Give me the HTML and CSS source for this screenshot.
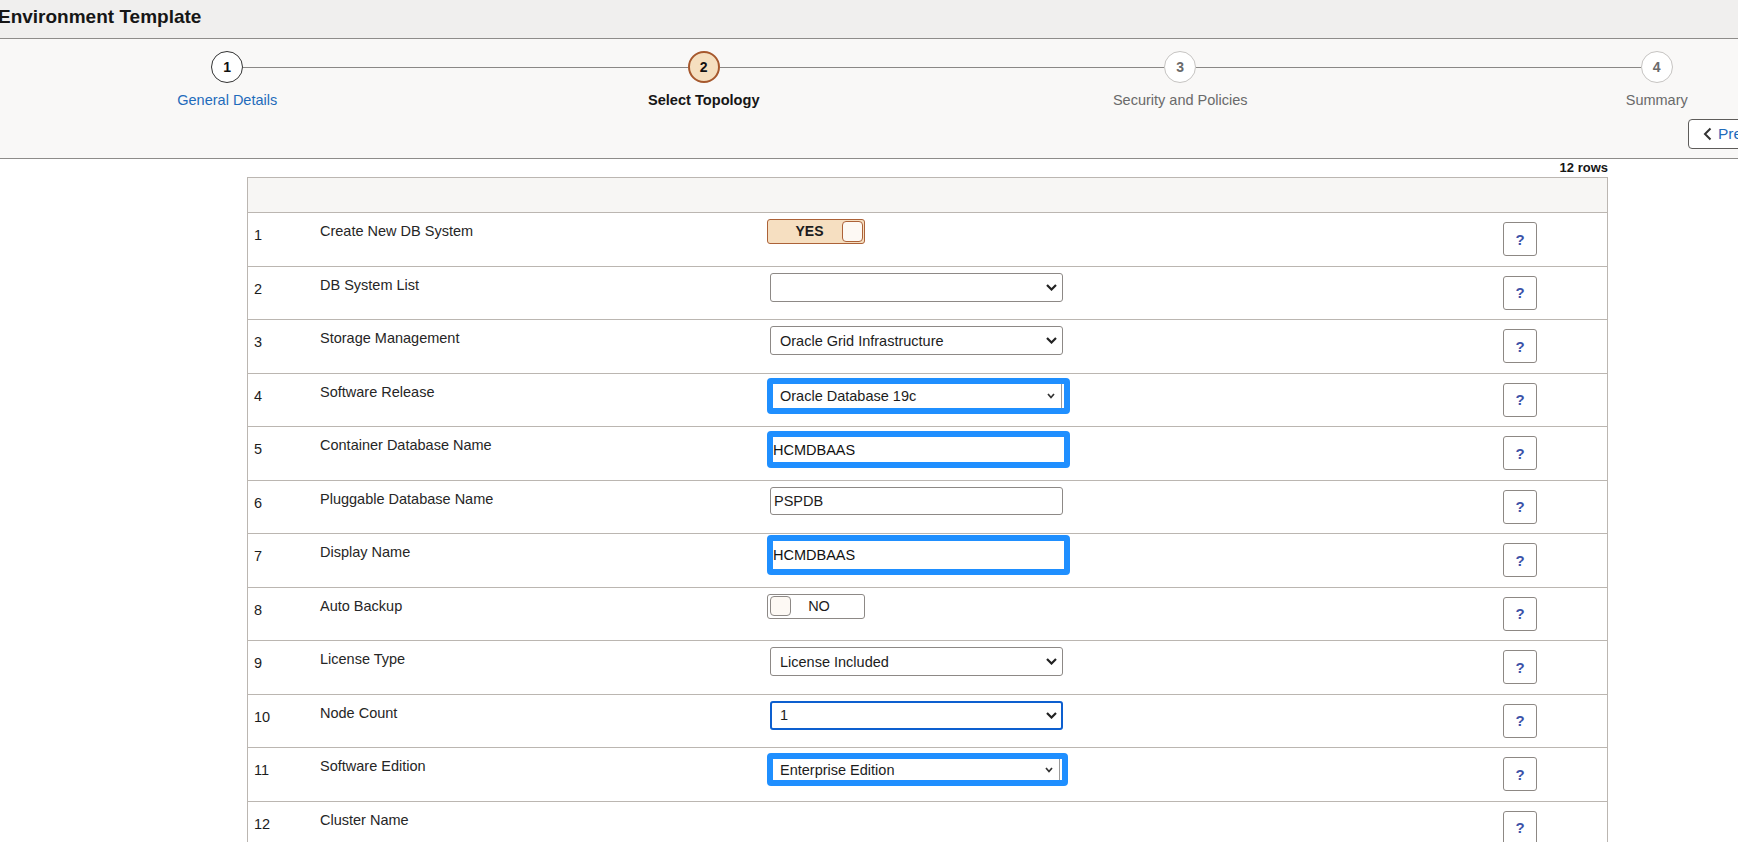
FILE: index.html
```html
<!DOCTYPE html>
<html lang="en">
<head>
<meta charset="utf-8">
<title>Environment Template</title>
<link rel="stylesheet" href="styles.css">
</head>
<body>
<header class="titlebar">
  <h1 class="title">Environment Template</h1>
</header>

<section class="wizard">
  <ol class="steps">
    <li class="step step-done">
      <div class="step-head"><span class="line line-none"></span><span class="circle">1</span><span class="line"></span></div>
      <span class="step-label">General Details</span>
    </li>
    <li class="step step-current">
      <div class="step-head"><span class="line"></span><span class="circle">2</span><span class="line"></span></div>
      <span class="step-label">Select Topology</span>
    </li>
    <li class="step step-future">
      <div class="step-head"><span class="line"></span><span class="circle">3</span><span class="line"></span></div>
      <span class="step-label">Security and Policies</span>
    </li>
    <li class="step step-future">
      <div class="step-head"><span class="line"></span><span class="circle">4</span><span class="line line-none"></span></div>
      <span class="step-label">Summary</span>
    </li>
  </ol>
  <div class="wizard-actions">
    <button class="nav-btn" type="button">
      <svg class="nav-chev" width="9" height="14" viewBox="0 0 9 14"><path d="M7.5 1.5 L2 7 L7.5 12.5" fill="none" stroke="#333" stroke-width="2"/></svg>
      <span class="nav-text">Previous</span>
    </button>
  </div>
</section>

<main class="grid-wrap">
  <div class="rowcount">12 rows</div>
  <div class="table">
    <div class="thead"></div>

    <div class="trow">
      <div class="c-num">1</div>
      <div class="c-label">Create New DB System</div>
      <div class="c-ctrl">
        <div class="toggle toggle-on"><span class="toggle-text">YES</span><span class="knob"></span></div>
      </div>
      <div class="c-help"><button class="help" type="button">?</button></div>
    </div>

    <div class="trow">
      <div class="c-num">2</div>
      <div class="c-label">DB System List</div>
      <div class="c-ctrl">
        <div class="select"><span class="select-text"></span><svg class="chev" width="11" height="7" viewBox="0 0 11 7"><path d="M1 1 L5.5 5.5 L10 1" fill="none" stroke="#222" stroke-width="2.2"/></svg></div>
      </div>
      <div class="c-help"><button class="help" type="button">?</button></div>
    </div>

    <div class="trow">
      <div class="c-num">3</div>
      <div class="c-label">Storage Management</div>
      <div class="c-ctrl">
        <div class="select"><span class="select-text">Oracle Grid Infrastructure</span><svg class="chev" width="11" height="7" viewBox="0 0 11 7"><path d="M1 1 L5.5 5.5 L10 1" fill="none" stroke="#222" stroke-width="2.2"/></svg></div>
      </div>
      <div class="c-help"><button class="help" type="button">?</button></div>
    </div>

    <div class="trow">
      <div class="c-num">4</div>
      <div class="c-label">Software Release</div>
      <div class="c-ctrl">
        <div class="hl hl-r4"><div class="hl-select"><span class="select-text">Oracle Database 19c</span><svg class="chev-sm" width="8" height="6" viewBox="0 0 8 6"><path d="M1 1 L4 4.5 L7 1" fill="none" stroke="#333" stroke-width="1.7"/></svg></div></div>
      </div>
      <div class="c-help"><button class="help" type="button">?</button></div>
    </div>

    <div class="trow">
      <div class="c-num">5</div>
      <div class="c-label">Container Database Name</div>
      <div class="c-ctrl">
        <div class="hl hl-r5"><span class="hl-input">HCMDBAAS</span></div>
      </div>
      <div class="c-help"><button class="help" type="button">?</button></div>
    </div>

    <div class="trow">
      <div class="c-num">6</div>
      <div class="c-label">Pluggable Database Name</div>
      <div class="c-ctrl">
        <input class="text-input" type="text" value="PSPDB">
      </div>
      <div class="c-help"><button class="help" type="button">?</button></div>
    </div>

    <div class="trow">
      <div class="c-num">7</div>
      <div class="c-label">Display Name</div>
      <div class="c-ctrl">
        <div class="hl hl-r7"><span class="hl-input">HCMDBAAS</span></div>
      </div>
      <div class="c-help"><button class="help" type="button">?</button></div>
    </div>

    <div class="trow">
      <div class="c-num">8</div>
      <div class="c-label">Auto Backup</div>
      <div class="c-ctrl">
        <div class="toggle toggle-off"><span class="knob"></span><span class="toggle-text">NO</span></div>
      </div>
      <div class="c-help"><button class="help" type="button">?</button></div>
    </div>

    <div class="trow">
      <div class="c-num">9</div>
      <div class="c-label">License Type</div>
      <div class="c-ctrl">
        <div class="select"><span class="select-text">License Included</span><svg class="chev" width="11" height="7" viewBox="0 0 11 7"><path d="M1 1 L5.5 5.5 L10 1" fill="none" stroke="#222" stroke-width="2.2"/></svg></div>
      </div>
      <div class="c-help"><button class="help" type="button">?</button></div>
    </div>

    <div class="trow">
      <div class="c-num">10</div>
      <div class="c-label">Node Count</div>
      <div class="c-ctrl">
        <div class="select select-focus"><span class="select-text">1</span><svg class="chev" width="11" height="7" viewBox="0 0 11 7"><path d="M1 1 L5.5 5.5 L10 1" fill="none" stroke="#222" stroke-width="2.2"/></svg></div>
      </div>
      <div class="c-help"><button class="help" type="button">?</button></div>
    </div>

    <div class="trow">
      <div class="c-num">11</div>
      <div class="c-label">Software Edition</div>
      <div class="c-ctrl">
        <div class="hl hl-r11"><div class="hl-select"><span class="select-text">Enterprise Edition</span><svg class="chev-sm" width="8" height="6" viewBox="0 0 8 6"><path d="M1 1 L4 4.5 L7 1" fill="none" stroke="#333" stroke-width="1.7"/></svg></div></div>
      </div>
      <div class="c-help"><button class="help" type="button">?</button></div>
    </div>

    <div class="trow">
      <div class="c-num">12</div>
      <div class="c-label">Cluster Name</div>
      <div class="c-ctrl"></div>
      <div class="c-help"><button class="help" type="button">?</button></div>
    </div>
  </div>
</main>
</body>
</html>
```

FILE: styles.css
```css
* { box-sizing: border-box; }

html, body {
  margin: 0;
  padding: 0;
  overflow: hidden;
}

body {
  width: 1738px;
  height: 842px;
  background: #ffffff;
  font-family: "Liberation Sans", Arial, sans-serif;
  font-size: 14.5px;
  color: #222222;
}

/* ---------- title bar ---------- */
.titlebar {
  height: 39px;
  background: #f0efee;
  border-bottom: 1px solid #8e8c8a;
  padding-top: 6px;
}

.title {
  margin: 0;
  font-size: 19px;
  line-height: 22px;
  font-weight: bold;
  color: #161616;
  text-indent: -2px;
  white-space: nowrap;
}

/* ---------- wizard ---------- */
.wizard {
  height: 120px;
  background: #f9f8f7;
  border-bottom: 1px solid #8e8c8a;
  padding-top: 12px;
}

.steps {
  list-style: none;
  margin: 0 0 0 -11px;
  padding: 0;
  width: 1906px;
  display: grid;
  grid-template-columns: repeat(4, 1fr);
}

.step {
  display: flex;
  flex-direction: column;
  align-items: center;
}

.step-head {
  width: 100%;
  display: flex;
  align-items: center;
}

.line {
  flex: 1;
  height: 1px;
  background: #8a8886;
}

.line-none { background: transparent; }

.circle {
  flex-shrink: 0;
  width: 32px;
  height: 32px;
  border-radius: 50%;
  display: flex;
  align-items: center;
  justify-content: center;
  font-size: 14px;
  font-weight: bold;
  background: #ffffff;
  border: 1px solid #333333;
  color: #111111;
}

.step-label {
  margin-top: 8px;
  line-height: 18px;
  font-size: 14.5px;
  color: #6a6a6a;
  white-space: nowrap;
}

.step-done .step-label { color: #1f6bbb; }

.step-current .circle {
  background: #f5dfbf;
  border: 2px solid #a6582d;
}

.step-current .step-label {
  color: #161616;
  font-weight: bold;
  font-size: 14.6px;
}

.step-future .circle {
  border-color: #c6c4c2;
  color: #6a6a6a;
}

.wizard-actions {
  display: flex;
  margin-top: 10px;
  padding-left: 1688px;
}

.nav-btn {
  flex-shrink: 0;
  height: 30px;
  display: flex;
  align-items: center;
  gap: 6px;
  padding: 0 12px 0 14px;
  background: #ffffff;
  border: 1px solid #5e5c5a;
  border-radius: 4px;
  font-family: inherit;
}

.nav-text {
  font-size: 15.5px;
  color: #1f6bbb;
  white-space: nowrap;
}

/* ---------- grid ---------- */
.grid-wrap {
  margin-left: 247px;
  width: 1361px;
}

.rowcount {
  height: 18px;
  line-height: 18px;
  text-align: right;
  font-size: 13px;
  font-weight: bold;
  color: #161616;
}

.table {
  border: 1px solid #bbb6b1;
}

.thead {
  height: 35px;
  background: #f7f6f4;
  border-bottom: 1px solid #bbb6b1;
}

.trow {
  height: 53.5px;
  display: grid;
  grid-template-columns: 72px 447px 683px 140px 1fr;
  align-items: start;
  border-bottom: 1px solid #bbb6b1;
}

.c-num {
  padding: 14px 0 0 6px;
  line-height: 17px;
  color: #1c1c1c;
}

.c-label {
  padding-top: 10px;
  line-height: 17px;
  color: #262626;
}

.c-ctrl {
  padding-top: 6px;
}

.c-help {
  padding-top: 9px;
  display: flex;
  justify-content: center;
}

.help {
  width: 34px;
  height: 34px;
  padding: 0;
  background: #ffffff;
  border: 1px solid #8d8884;
  border-radius: 3px;
  font-family: "Liberation Sans", Arial, sans-serif;
  font-size: 15px;
  font-weight: bold;
  color: #3d52a8;
}

/* toggles */
.toggle {
  width: 98px;
  height: 25px;
  border: 1px solid #8d8986;
  border-radius: 3px;
  display: flex;
  align-items: center;
}

.knob {
  flex-shrink: 0;
  width: 21px;
  height: 21px;
  border-radius: 4px;
  background: #fdf9f4;
  border: 1px solid #8d8986;
}

.toggle-text {
  flex: 1;
  text-align: center;
  line-height: 17px;
}

.toggle-on {
  background: #f6dfc1;
  border-color: #ac6238;
}

.toggle-on .knob {
  border-color: #ac6238;
  margin-right: 1px;
}

.toggle-on .toggle-text {
  font-weight: bold;
  font-size: 14px;
  padding-left: 9px;
  color: #1c1c1c;
}

.toggle-off {
  background: #ffffff;
}

.toggle-off .knob {
  margin-left: 2px;
  height: 20px;
}

.toggle-off .toggle-text {
  padding-right: 17px;
  font-size: 14.5px;
  color: #1c1c1c;
}

/* selects & inputs */
.select {
  margin-left: 3px;
  width: 293px;
  height: 29px;
  border: 1px solid #8d8986;
  border-radius: 3px;
  background: #ffffff;
  display: flex;
  align-items: center;
  padding: 0 5px 0 9px;
}

.select-focus {
  border: 2px solid #0d5fcf;
  padding-left: 8px;
  padding-right: 4px;
}

.select-text {
  flex: 1;
  white-space: nowrap;
  color: #1c1c1c;
}

.chev { flex-shrink: 0; }

.text-input {
  display: block;
  margin: 0 0 0 3px;
  width: 293px;
  height: 28px;
  border: 1px solid #8d8986;
  border-radius: 3px;
  padding: 0 3px;
  font-family: "Liberation Sans", Arial, sans-serif;
  font-size: 14.5px;
  color: #1c1c1c;
  background: #ffffff;
}

/* blue annotation boxes */
.hl {
  width: 303px;
  height: 36px;
  border: 6px solid #1f8fff;
  border-radius: 4px;
  background: #ffffff;
  display: flex;
  align-items: stretch;
  padding-right: 2px;
}

.hl-r4 { margin-top: -2px; }
.hl-r5 { height: 37px; margin-top: -2px; }
.hl-r7 { height: 40px; margin-top: -5px; }
.hl-r11 { width: 301px; height: 33px; margin-top: -1px; }

.hl-select {
  flex: 1;
  display: flex;
  align-items: center;
  padding: 0 6px 0 7px;
  border-right: 1px solid #9a9a9a;
}

.chev-sm { flex-shrink: 0; }

.hl-input {
  flex: 1;
  display: flex;
  align-items: center;
  padding-left: 0;
  color: #111111;
}
```
